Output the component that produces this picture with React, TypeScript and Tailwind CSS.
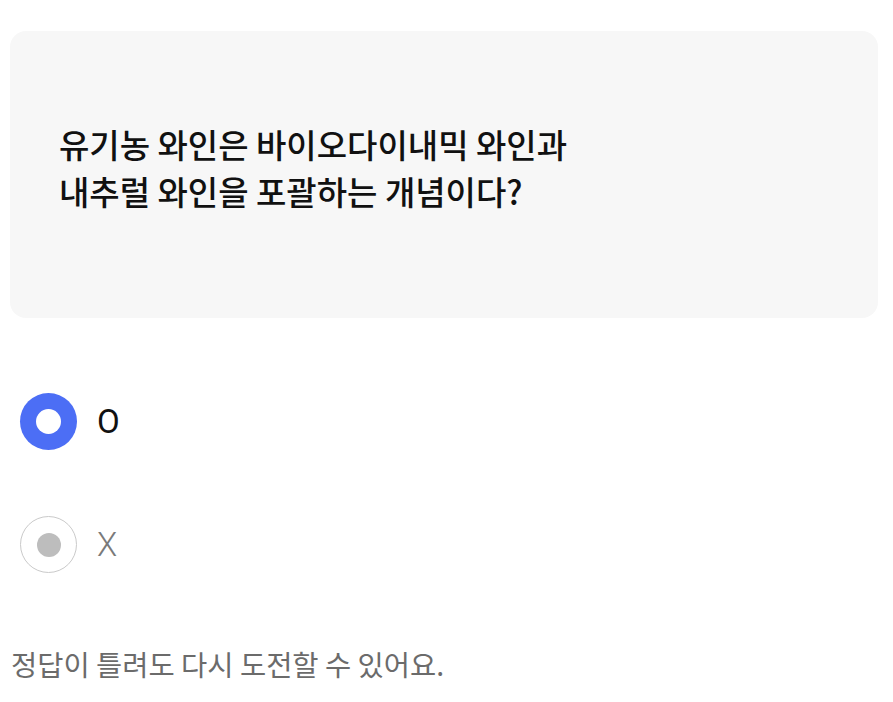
import React from "react";

export default function App() {
  const kr = { fontFamily: '"Noto Sans CJK KR", "Noto Sans", sans-serif' } as React.CSSProperties;
  return (
    <div className="w-[893px] h-[702px] bg-white overflow-hidden" style={kr}>
      <div className="pt-[31px] pl-[10px] pr-[15px]">
        <div className="h-[287px] rounded-[16px] bg-[#f7f7f7] flex items-center pl-[49px] pb-[14px]">
          <p className="text-[33px] leading-[47px] font-medium text-[#111111]">
            유기농 와인은 바이오다이내믹 와인과
            <br />
            내추럴 와인을 포괄하는 개념이다?
          </p>
        </div>
      </div>

      <div className="mt-[75px] pl-[20px] flex flex-col gap-[66px]">
        <div className="flex items-center gap-[20px] h-[57px]">
          <div className="w-[57px] h-[57px] rounded-full bg-[#4c6ef5] flex items-center justify-center">
            <div className="w-[25px] h-[25px] rounded-full bg-white" />
          </div>
          <span className="text-[33px] leading-none text-[#111111] font-normal" style={{ fontFamily: "Roboto, sans-serif" }}>
            O
          </span>
        </div>
        <div className="flex items-center gap-[20px] h-[57px]">
          <div className="w-[57px] h-[57px] rounded-full border-[1.5px] border-[#cacaca] bg-white flex items-center justify-center">
            <div className="w-[24px] h-[24px] rounded-full bg-[#bdbdbd]" />
          </div>
          <span className="text-[33px] leading-none text-[#7a7a7a] font-light" style={{ fontFamily: "Roboto, sans-serif" }}>
            X
          </span>
        </div>
      </div>

      <p className="mt-[73px] pl-[11px] text-[28.5px] leading-[36px] text-[#6b6b6b]">
        정답이 틀려도 다시 도전할 수 있어요.
      </p>
    </div>
  );
}
